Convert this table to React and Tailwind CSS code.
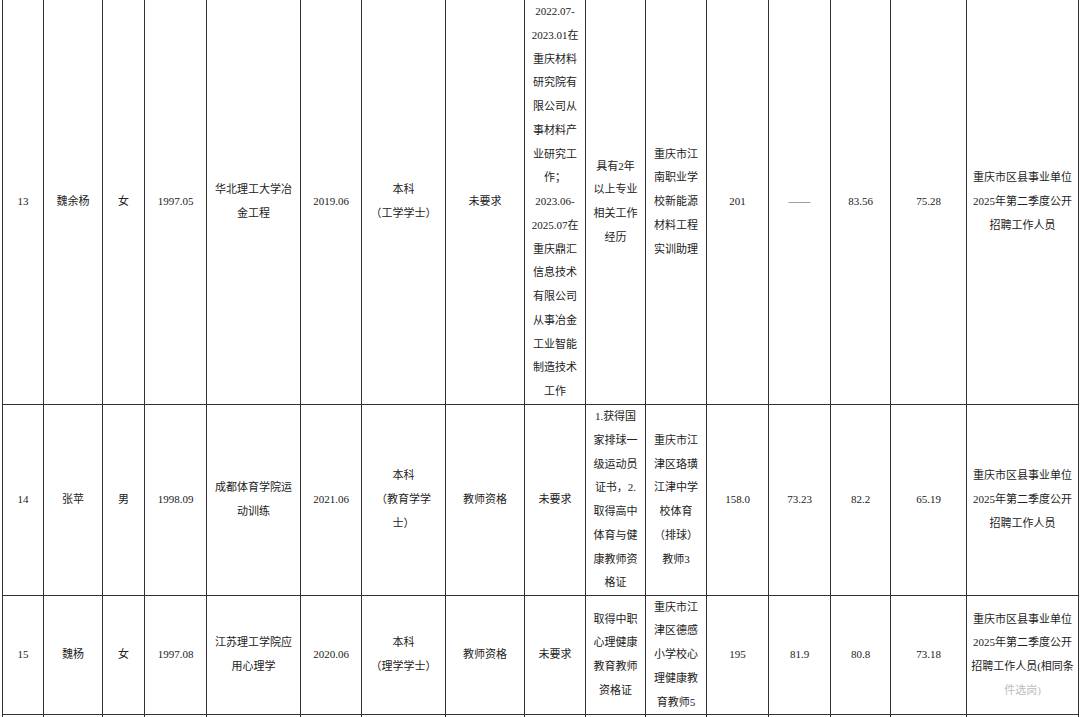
import React from "react";

const widths = [41, 59, 42, 62, 94, 61, 84, 79, 61, 60, 61, 62, 62, 60, 76, 112];

const rows = [
  {
    h: "h-[405px]",
    cells: [
      ["13"],
      ["魏余杨"],
      ["女"],
      ["1997.05"],
      ["华北理工大学冶", "金工程"],
      ["2019.06"],
      ["本科", "（工学学士）"],
      ["未要求"],
      [
        "2022.07-",
        "2023.01在",
        "重庆材料",
        "研究院有",
        "限公司从",
        "事材料产",
        "业研究工",
        "作；",
        "2023.06-",
        "2025.07在",
        "重庆鼎汇",
        "信息技术",
        "有限公司",
        "从事冶金",
        "工业智能",
        "制造技术",
        "工作",
      ],
      ["具有2年", "以上专业", "相关工作", "经历"],
      ["重庆市江", "南职业学", "校新能源", "材料工程", "实训助理"],
      ["201"],
      ["——"],
      ["83.56"],
      ["75.28"],
      ["重庆市区县事业单位", "2025年第二季度公开", "招聘工作人员"],
    ],
  },
  {
    h: "h-[191px]",
    cells: [
      ["14"],
      ["张苹"],
      ["男"],
      ["1998.09"],
      ["成都体育学院运", "动训练"],
      ["2021.06"],
      ["本科", "（教育学学", "士）"],
      ["教师资格"],
      ["未要求"],
      ["1.获得国", "家排球一", "级运动员", "证书，2.", "取得高中", "体育与健", "康教师资", "格证"],
      ["重庆市江", "津区珞璜", "江津中学", "校体育", "（排球）", "教师3"],
      ["158.0"],
      ["73.23"],
      ["82.2"],
      ["65.19"],
      ["重庆市区县事业单位", "2025年第二季度公开", "招聘工作人员"],
    ],
  },
  {
    h: "h-[119px]",
    cells: [
      ["15"],
      ["魏杨"],
      ["女"],
      ["1997.08"],
      ["江苏理工学院应", "用心理学"],
      ["2020.06"],
      ["本科", "（理学学士）"],
      ["教师资格"],
      ["未要求"],
      ["取得中职", "心理健康", "教育教师", "资格证"],
      ["重庆市江", "津区德感", "小学校心", "理健康教", "育教师5"],
      ["195"],
      ["81.9"],
      ["80.8"],
      ["73.18"],
      ["重庆市区县事业单位", "2025年第二季度公开", "招聘工作人员(相同条", "件选岗)"],
    ],
  },
];

function Cell({ w, lines, fadeLast }) {
  return (
    <div
      className="flex shrink-0 items-center justify-center border-r border-[#333] text-center"
      style={{ width: w }}
    >
      <div className="whitespace-nowrap">
        {lines.map((l, i) => (
          <div
            key={i}
            className={
              l === "——"
                ? "text-[#555]"
                : fadeLast && i === lines.length - 1
                ? "text-[#bbb]"
                : ""
            }
          >
            {l}
          </div>
        ))}
      </div>
    </div>
  );
}

export default function App() {
  return (
    <div className="h-[717px] w-[1080px] overflow-hidden bg-white">
      <div
        className="ml-[2px] w-[1077px] border-l border-[#333] text-[11px] leading-[23.75px] text-[#222]"
        style={{ fontFamily: '"Liberation Serif", "Noto Sans CJK SC", serif' }}
      >
        {rows.map((r, ri) => (
          <div key={ri} className={`flex border-b border-[#333] ${r.h}`}>
            {r.cells.map((c, ci) => (
              <Cell key={ci} w={widths[ci]} lines={c} fadeLast={ri === 2 && ci === 15} />
            ))}
          </div>
        ))}
        <div className="flex h-[40px]">
          {widths.map((w, i) => (
            <div key={i} className="shrink-0 border-r border-[#333]" style={{ width: w }} />
          ))}
        </div>
      </div>
    </div>
  );
}
